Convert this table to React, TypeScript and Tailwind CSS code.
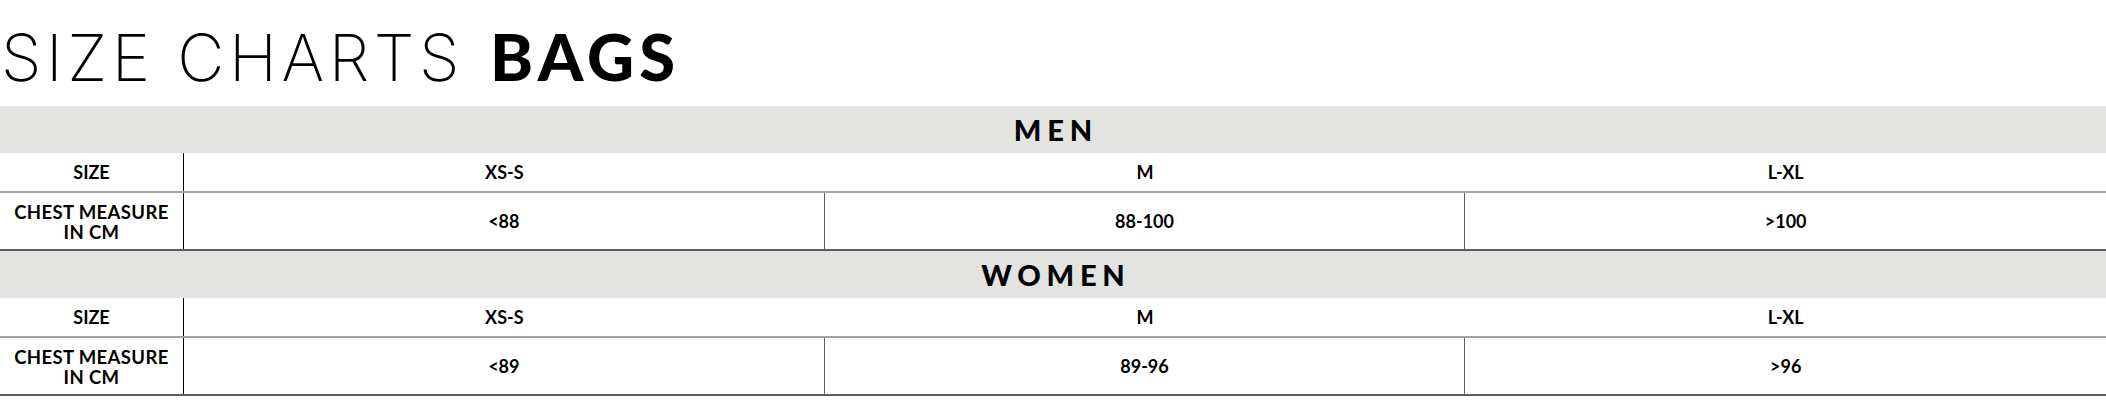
import React from "react";

const sections = [
  { title: "MEN", values: ["<88", "88-100", ">100"] },
  { title: "WOMEN", values: ["<89", "89-96", ">96"] },
];

const sizes = ["XS-S", "M", "L-XL"];

function Section({ title, values }: { title: string; values: string[] }) {
  return (
    <div>
      <div className="h-[47px] bg-[#e3e3e2] flex items-center justify-center">
        <span className="text-[29px] font-black tracking-[0.2em] pl-[0.2em] text-black leading-none">
          {title}
        </span>
      </div>
      <div className="grid grid-cols-[184px_1fr_1fr_1fr] h-[40px] border-b-2 border-[#a2a2a2]">
        <div className="flex items-center justify-center border-r border-black text-[18px] font-bold">
          SIZE
        </div>
        {sizes.map((s) => (
          <div key={s} className="flex items-center justify-center text-[18px] font-bold">
            {s}
          </div>
        ))}
      </div>
      <div className="grid grid-cols-[184px_1fr_1fr_1fr] h-[58px] border-b-2 border-[#5e5e5e]">
        <div className="flex items-center justify-center text-center border-r border-black text-[18.5px] tracking-[0.02em] font-bold leading-[20px] pt-[2px]">
          CHEST MEASURE
          <br />
          IN CM
        </div>
        {values.map((v, i) => (
          <div
            key={v}
            className={
              i < 2
                ? "flex items-center justify-center text-[18px] font-bold border-r border-[#5e5e5e]"
                : "flex items-center justify-center text-[18px] font-bold"
            }
          >
            {v}
          </div>
        ))}
      </div>
    </div>
  );
}

export default function App() {
  return (
    <div className="w-[2106px] bg-white text-black font-['Lato','Liberation_Sans',sans-serif]">
      <div className="h-[106px] pt-[24px] pl-[1px]">
        <h1 className="text-[65px] leading-none whitespace-nowrap">
          <span className="font-['Inter',sans-serif] font-extralight tracking-[0.07em]">SIZE CHARTS</span>
          <span className="ml-[26px] font-['Lato',sans-serif] font-black tracking-[0.08em]">BAGS</span>
        </h1>
      </div>
      {sections.map((s) => (
        <Section key={s.title} title={s.title} values={s.values} />
      ))}
    </div>
  );
}
